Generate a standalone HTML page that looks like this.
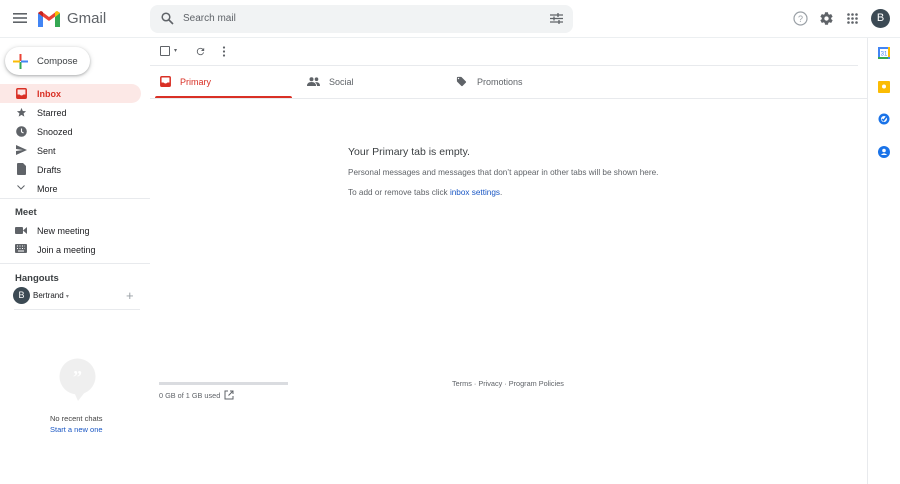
<!DOCTYPE html>
<html><head><meta charset="utf-8"><style>
*{margin:0;padding:0;box-sizing:border-box}
body{width:900px;height:484px;overflow:hidden;background:#fff;font-family:"Liberation Sans",Arial,sans-serif;color:#202124;position:relative}
.a{position:absolute}
.nav{position:absolute;left:37px;font-size:9px;color:#202124}
.ic{position:absolute}
.hr{position:absolute;height:1px;background:#e8eaed}
</style></head><body>
<!-- header -->
<svg class="a" style="left:13px;top:12px" width="14" height="12" viewBox="0 0 14 12"><rect y="1" width="14" height="1.6" fill="#5f6368"/><rect y="5.2" width="14" height="1.6" fill="#5f6368"/><rect y="9.4" width="14" height="1.6" fill="#5f6368"/></svg>
<svg class="a" style="left:38px;top:11px" width="22" height="16" viewBox="0 0 22 16">
<path d="M0 2 V16 H5 V6 Z" fill="#4285f4"/><path d="M17 6 V16 H22 V2 Z" fill="#34a853"/>
<path d="M0 2 L11 10 L22 2 L19 0 L11 6 L3 0 Z" fill="#ea4335"/><path d="M22 2 L17 6 V1 L19 0 Z" fill="#fbbc04"/><path d="M0 2 L5 6 V1 L3 0Z" fill="#c5221f"/></svg>
<div class="a" style="left:67px;top:10px;font-size:15px;color:#5f6368">Gmail</div>
<div class="a" style="left:150px;top:5px;width:423px;height:28px;background:#f1f3f4;border-radius:8px"></div>
<svg class="a" style="left:161px;top:12px" width="13" height="13" viewBox="0 0 13 13"><circle cx="5" cy="5" r="3.8" fill="none" stroke="#5f6368" stroke-width="1.5"/><path d="M8 8 L12 12" stroke="#5f6368" stroke-width="1.6"/></svg>
<div class="a" style="left:183px;top:13px;font-size:10px;color:#5f6368">Search mail</div>
<svg class="a" style="left:550px;top:13px" width="13" height="11" viewBox="0 0 13 11" stroke="#5f6368" stroke-width="1.3"><path d="M0 2H13M0 5.5H13M0 9H13"/><path d="M8 0V4M4 3.5V7.5M9 7V11" /></svg>
<svg class="a" style="left:793px;top:11px" width="15" height="15" viewBox="0 0 15 15"><circle cx="7.5" cy="7.5" r="6.5" fill="none" stroke="#9aa0a6" stroke-width="1.2"/><text x="7.5" y="11" font-size="9" text-anchor="middle" fill="#9aa0a6" font-family="Liberation Sans">?</text></svg>
<svg class="a" style="left:819px;top:11px" width="15" height="15" viewBox="0 0 24 24"><path fill="#5f6368" d="M19.4 13c.04-.3.06-.66.06-1s-.02-.7-.07-1l2.1-1.65c.2-.15.24-.42.12-.64l-2-3.46c-.12-.22-.39-.3-.61-.22l-2.49 1c-.52-.4-1.08-.73-1.69-.98l-.38-2.65A.49.49 0 0 0 14 2h-4c-.25 0-.46.18-.49.42l-.38 2.65c-.61.25-1.17.59-1.69.98l-2.49-1c-.23-.09-.49 0-.61.22l-2 3.46c-.13.22-.07.49.12.64L4.57 11c-.05.32-.07.66-.07 1s.02.68.07 1l-2.11 1.65c-.19.15-.24.42-.12.64l2 3.46c.12.22.39.3.61.22l2.49-1c.52.4 1.08.73 1.69.98l.38 2.65c.03.24.24.42.49.42h4c.25 0 .46-.18.49-.42l.38-2.65c.61-.25 1.17-.59 1.69-.98l2.49 1c.23.09.49 0 .61-.22l2-3.46c.12-.22.07-.49-.12-.64L19.4 13zM12 15.5A3.5 3.5 0 1 1 12 8.5a3.5 3.5 0 0 1 0 7z"/></svg>
<svg class="a" style="left:847px;top:13px" width="11" height="11" viewBox="0 0 11 11" fill="#5f6368"><circle cx="1.5" cy="1.5" r="1.3"/><circle cx="5.5" cy="1.5" r="1.3"/><circle cx="9.5" cy="1.5" r="1.3"/><circle cx="1.5" cy="5.5" r="1.3"/><circle cx="5.5" cy="5.5" r="1.3"/><circle cx="9.5" cy="5.5" r="1.3"/><circle cx="1.5" cy="9.5" r="1.3"/><circle cx="5.5" cy="9.5" r="1.3"/><circle cx="9.5" cy="9.5" r="1.3"/></svg>
<div class="a" style="left:871px;top:9px;width:19px;height:19px;border-radius:50%;background:#3c4a54;color:#fff;font-size:11px;text-align:center;line-height:19px">B</div>
<div class="hr" style="left:0;top:37px;width:900px;background:#eceff1"></div>
<!-- compose -->
<div class="a" style="left:5px;top:47px;width:85px;height:28px;border-radius:14px;background:#fff;box-shadow:0 1px 2px rgba(60,64,67,.3),0 1px 4px 1px rgba(60,64,67,.15)"></div>
<svg class="a" style="left:13px;top:54px" width="15" height="15" viewBox="0 0 15 15"><rect x="6.5" y="0" width="2" height="7" fill="#ea4335"/><rect x="6.5" y="8" width="2" height="7" fill="#34a853"/><rect x="0" y="6.5" width="7" height="2" fill="#fbbc04"/><rect x="8" y="6.5" width="7" height="2" fill="#4285f4"/></svg>
<div class="a" style="left:37px;top:56px;font-size:9.5px;color:#3c4043">Compose</div>
<!-- nav -->
<div class="a" style="left:0;top:84px;width:141px;height:19px;background:#fce8e6;border-radius:0 10px 10px 0"></div>
<svg class="ic" style="left:16px;top:88px" width="11" height="11" viewBox="0 0 11 11"><rect x=".8" y=".8" width="9.4" height="9.4" rx="1" fill="none" stroke="#d93025" stroke-width="1.5"/><path d="M1 6.5H3.5Q5.5 8.5 7.5 6.5H10V10H1Z" fill="#d93025"/></svg>
<div class="nav" style="top:89px;color:#d93025;font-weight:bold">Inbox</div>
<svg class="ic" style="left:16px;top:107px" width="11" height="11" viewBox="0 0 24 24"><path fill="#5f6368" d="M12 17.3l6.2 3.7-1.6-7L22 9.2l-7.2-.6L12 2 9.2 8.6 2 9.2 7.5 14l-1.7 7z"/></svg>
<div class="nav" style="top:108px">Starred</div>
<svg class="ic" style="left:16px;top:126px" width="11" height="11" viewBox="0 0 11 11"><circle cx="5.5" cy="5.5" r="5.3" fill="#5f6368"/><path d="M5.5 2.5V5.8L7.5 7" stroke="#fff" stroke-width="1.1" fill="none"/></svg>
<div class="nav" style="top:127px">Snoozed</div>
<svg class="ic" style="left:16px;top:145px" width="11" height="10" viewBox="0 0 11 10"><path d="M0 0L11 5L0 10V6L7 5L0 4Z" fill="#5f6368"/></svg>
<div class="nav" style="top:146px">Sent</div>
<svg class="ic" style="left:17px;top:163px" width="9" height="12" viewBox="0 0 9 12"><path d="M0 1Q0 0 1 0H6L9 3V11Q9 12 8 12H1Q0 12 0 11Z" fill="#5f6368"/></svg>
<div class="nav" style="top:165px">Drafts</div>
<svg class="ic" style="left:17px;top:185px" width="8" height="5" viewBox="0 0 8 5"><path d="M.5.5L4 4L7.5.5" stroke="#5f6368" fill="none"/></svg>
<div class="nav" style="top:184px">More</div>
<div class="hr" style="left:0;top:198px;width:150px"></div>
<div class="a" style="left:15px;top:207px;font-size:9.5px;font-weight:bold;color:#3c4043">Meet</div>
<svg class="ic" style="left:15px;top:227px" width="12" height="7" viewBox="0 0 12 7"><rect width="8" height="7" rx="1" fill="#5f6368"/><path d="M8 3.5L12 0V7Z" fill="#5f6368"/></svg>
<div class="nav" style="top:226px">New meeting</div>
<svg class="ic" style="left:15px;top:244px" width="12" height="9" viewBox="0 0 12 9"><rect width="12" height="9" rx="1" fill="#5f6368"/><path d="M2 2h1M4.5 2h1M7 2h1M9.5 2h.5M2 4.5h1M4.5 4.5h1M7 4.5h1M9.5 4.5h.5M3 7h6" stroke="#fff" stroke-width="1"/></svg>
<div class="nav" style="top:245px">Join a meeting</div>
<div class="hr" style="left:0;top:263px;width:150px"></div>
<div class="a" style="left:15px;top:273px;font-size:9.5px;font-weight:bold;color:#3c4043">Hangouts</div>
<div class="a" style="left:13px;top:287px;width:17px;height:17px;border-radius:50%;background:#3c4a54;color:#fff;font-size:9px;text-align:center;line-height:17px">B</div>
<div class="a" style="left:33px;top:291px;font-size:8px;color:#202124">Bertrand <span style="color:#888;font-size:6px">▾</span></div>
<div class="a" style="left:126px;top:288px;font-size:13px;color:#9aa0a6">+</div>
<div class="hr" style="left:14px;top:309px;width:126px"></div>
<svg class="a" style="left:59px;top:358px" width="37" height="43" viewBox="0 0 37 43"><circle cx="18.5" cy="18.5" r="18" fill="#efefef"/><path d="M15 34L26 34L19 43Z" fill="#efefef"/><text x="18.5" y="25" font-size="18" font-weight="bold" text-anchor="middle" fill="#fff" font-family="Liberation Serif">”</text></svg>
<div class="a" style="left:50px;top:414px;font-size:7.5px;color:#444">No recent chats</div>
<div class="a" style="left:50px;top:425px;font-size:7.5px;color:#1a57c4">Start a new one</div>
<!-- main -->
<div class="a" style="left:160px;top:46px;width:10px;height:10px;border:1.3px solid #5f6368;border-radius:1px"></div>
<div class="a" style="left:174px;top:47px;font-size:6px;color:#5f6368">▾</div>
<svg class="a" style="left:195px;top:46px" width="11" height="11" viewBox="0 0 24 24"><path fill="#5f6368" d="M17.65 6.35A7.96 7.96 0 0 0 12 4a8 8 0 1 0 7.73 10h-2.08A6 6 0 1 1 12 6c1.66 0 3.14.69 4.22 1.78L13 11h7V4l-2.35 2.35z"/></svg>
<svg class="a" style="left:222px;top:46px" width="4" height="11" viewBox="0 0 4 11" fill="#5f6368"><circle cx="2" cy="1.5" r="1.1"/><circle cx="2" cy="5.5" r="1.1"/><circle cx="2" cy="9.5" r="1.1"/></svg>
<div class="hr" style="left:150px;top:65px;width:708px"></div>
<svg class="a" style="left:160px;top:76px" width="11" height="11" viewBox="0 0 11 11"><rect x=".8" y=".8" width="9.4" height="9.4" rx="1" fill="none" stroke="#d93025" stroke-width="1.5"/><path d="M1 6.5H3.5Q5.5 8.5 7.5 6.5H10V10H1Z" fill="#d93025"/></svg>
<div class="a" style="left:180px;top:77px;font-size:9px;color:#d93025">Primary</div>
<div class="a" style="left:155px;top:96px;width:137px;height:2.5px;background:#d93025;border-radius:2px 2px 0 0"></div>
<svg class="a" style="left:307px;top:77px" width="13" height="9" viewBox="0 0 13 9" fill="#5f6368"><circle cx="4.5" cy="2.2" r="2"/><circle cx="9.5" cy="2.2" r="1.8"/><path d="M0 9Q0 5 4.5 5Q9 5 9 9Z"/><path d="M8 5.2Q13 4.5 13 9H10Q10 6.5 8 5.2Z"/></svg>
<div class="a" style="left:329px;top:77px;font-size:9px;color:#5f6368">Social</div>
<svg class="a" style="left:456px;top:76px" width="11" height="11" viewBox="0 0 24 24"><path fill="#5f6368" d="M21.4 11.6l-9-9C12.05 2.25 11.55 2 11 2H4c-1.1 0-2 .9-2 2v7c0 .55.22 1.05.59 1.42l9 9c.36.36.86.58 1.41.58.55 0 1.05-.22 1.41-.59l7-7c.37-.36.59-.86.59-1.41 0-.55-.23-1.06-.6-1.4zM5.5 7C4.67 7 4 6.33 4 5.5S4.67 4 5.5 4 7 4.67 7 5.5 6.33 7 5.5 7z"/></svg>
<div class="a" style="left:477px;top:77px;font-size:9px;color:#5f6368">Promotions</div>
<div class="hr" style="left:150px;top:98px;width:717px"></div>
<div class="a" style="left:348px;top:146px;font-size:10.5px;color:#3c4043">Your Primary tab is empty.</div>
<div class="a" style="left:348px;top:168px;font-size:8.2px;color:#5f6368">Personal messages and messages that don’t appear in other tabs will be shown here.</div>
<div class="a" style="left:348px;top:188px;font-size:8.2px;color:#5f6368">To add or remove tabs click <span style="color:#1a57c4">inbox settings</span>.</div>
<div class="a" style="left:159px;top:382px;width:129px;height:3px;background:#dadce0"></div>
<div class="a" style="left:159px;top:391px;font-size:7.3px;color:#5f6368">0 GB of 1 GB used</div>
<svg class="a" style="left:224px;top:390px" width="10" height="10" viewBox="0 0 10 10" stroke="#5f6368" fill="none" stroke-width="1"><path d="M4 1H1V9H9V6M6 1H9V4M9 1L4.5 5.5"/></svg>
<div class="a" style="left:452px;top:379px;font-size:7.3px;color:#5f6368">Terms · Privacy · Program Policies</div>
<!-- right panel -->
<div class="a" style="left:867px;top:38px;width:1px;height:446px;background:#e8eaed"></div>
<svg class="a" style="left:878px;top:47px" width="12" height="12" viewBox="0 0 12 12"><rect width="12" height="12" fill="#4285f4"/><rect x="2" y="2" width="8" height="8" fill="#fff"/><rect x="10" y="0" width="2" height="10" fill="#fbbc04"/><rect x="0" y="10" width="10" height="2" fill="#34a853"/><text x="6" y="8.5" font-size="6" text-anchor="middle" fill="#4285f4" font-family="Liberation Sans">31</text></svg>
<svg class="a" style="left:878px;top:81px" width="12" height="12" viewBox="0 0 12 12"><rect width="12" height="12" rx="1" fill="#fbbc04"/><circle cx="6" cy="5.5" r="2" fill="#fff"/></svg>
<svg class="a" style="left:878px;top:113px" width="12" height="12" viewBox="0 0 12 12"><circle cx="6" cy="6" r="5.5" fill="#1a73e8"/><circle cx="6" cy="6" r="3" fill="#fff"/><path d="M4 6L5.5 7.5L9 3" stroke="#1a73e8" stroke-width="1.5" fill="none"/></svg>
<svg class="a" style="left:878px;top:146px" width="12" height="12" viewBox="0 0 12 12"><circle cx="6" cy="6" r="6" fill="#1a73e8"/><circle cx="6" cy="4.5" r="1.8" fill="#fff"/><path d="M2.8 9Q6 5.5 9.2 9Z" fill="#fff"/></svg>
</body></html>
